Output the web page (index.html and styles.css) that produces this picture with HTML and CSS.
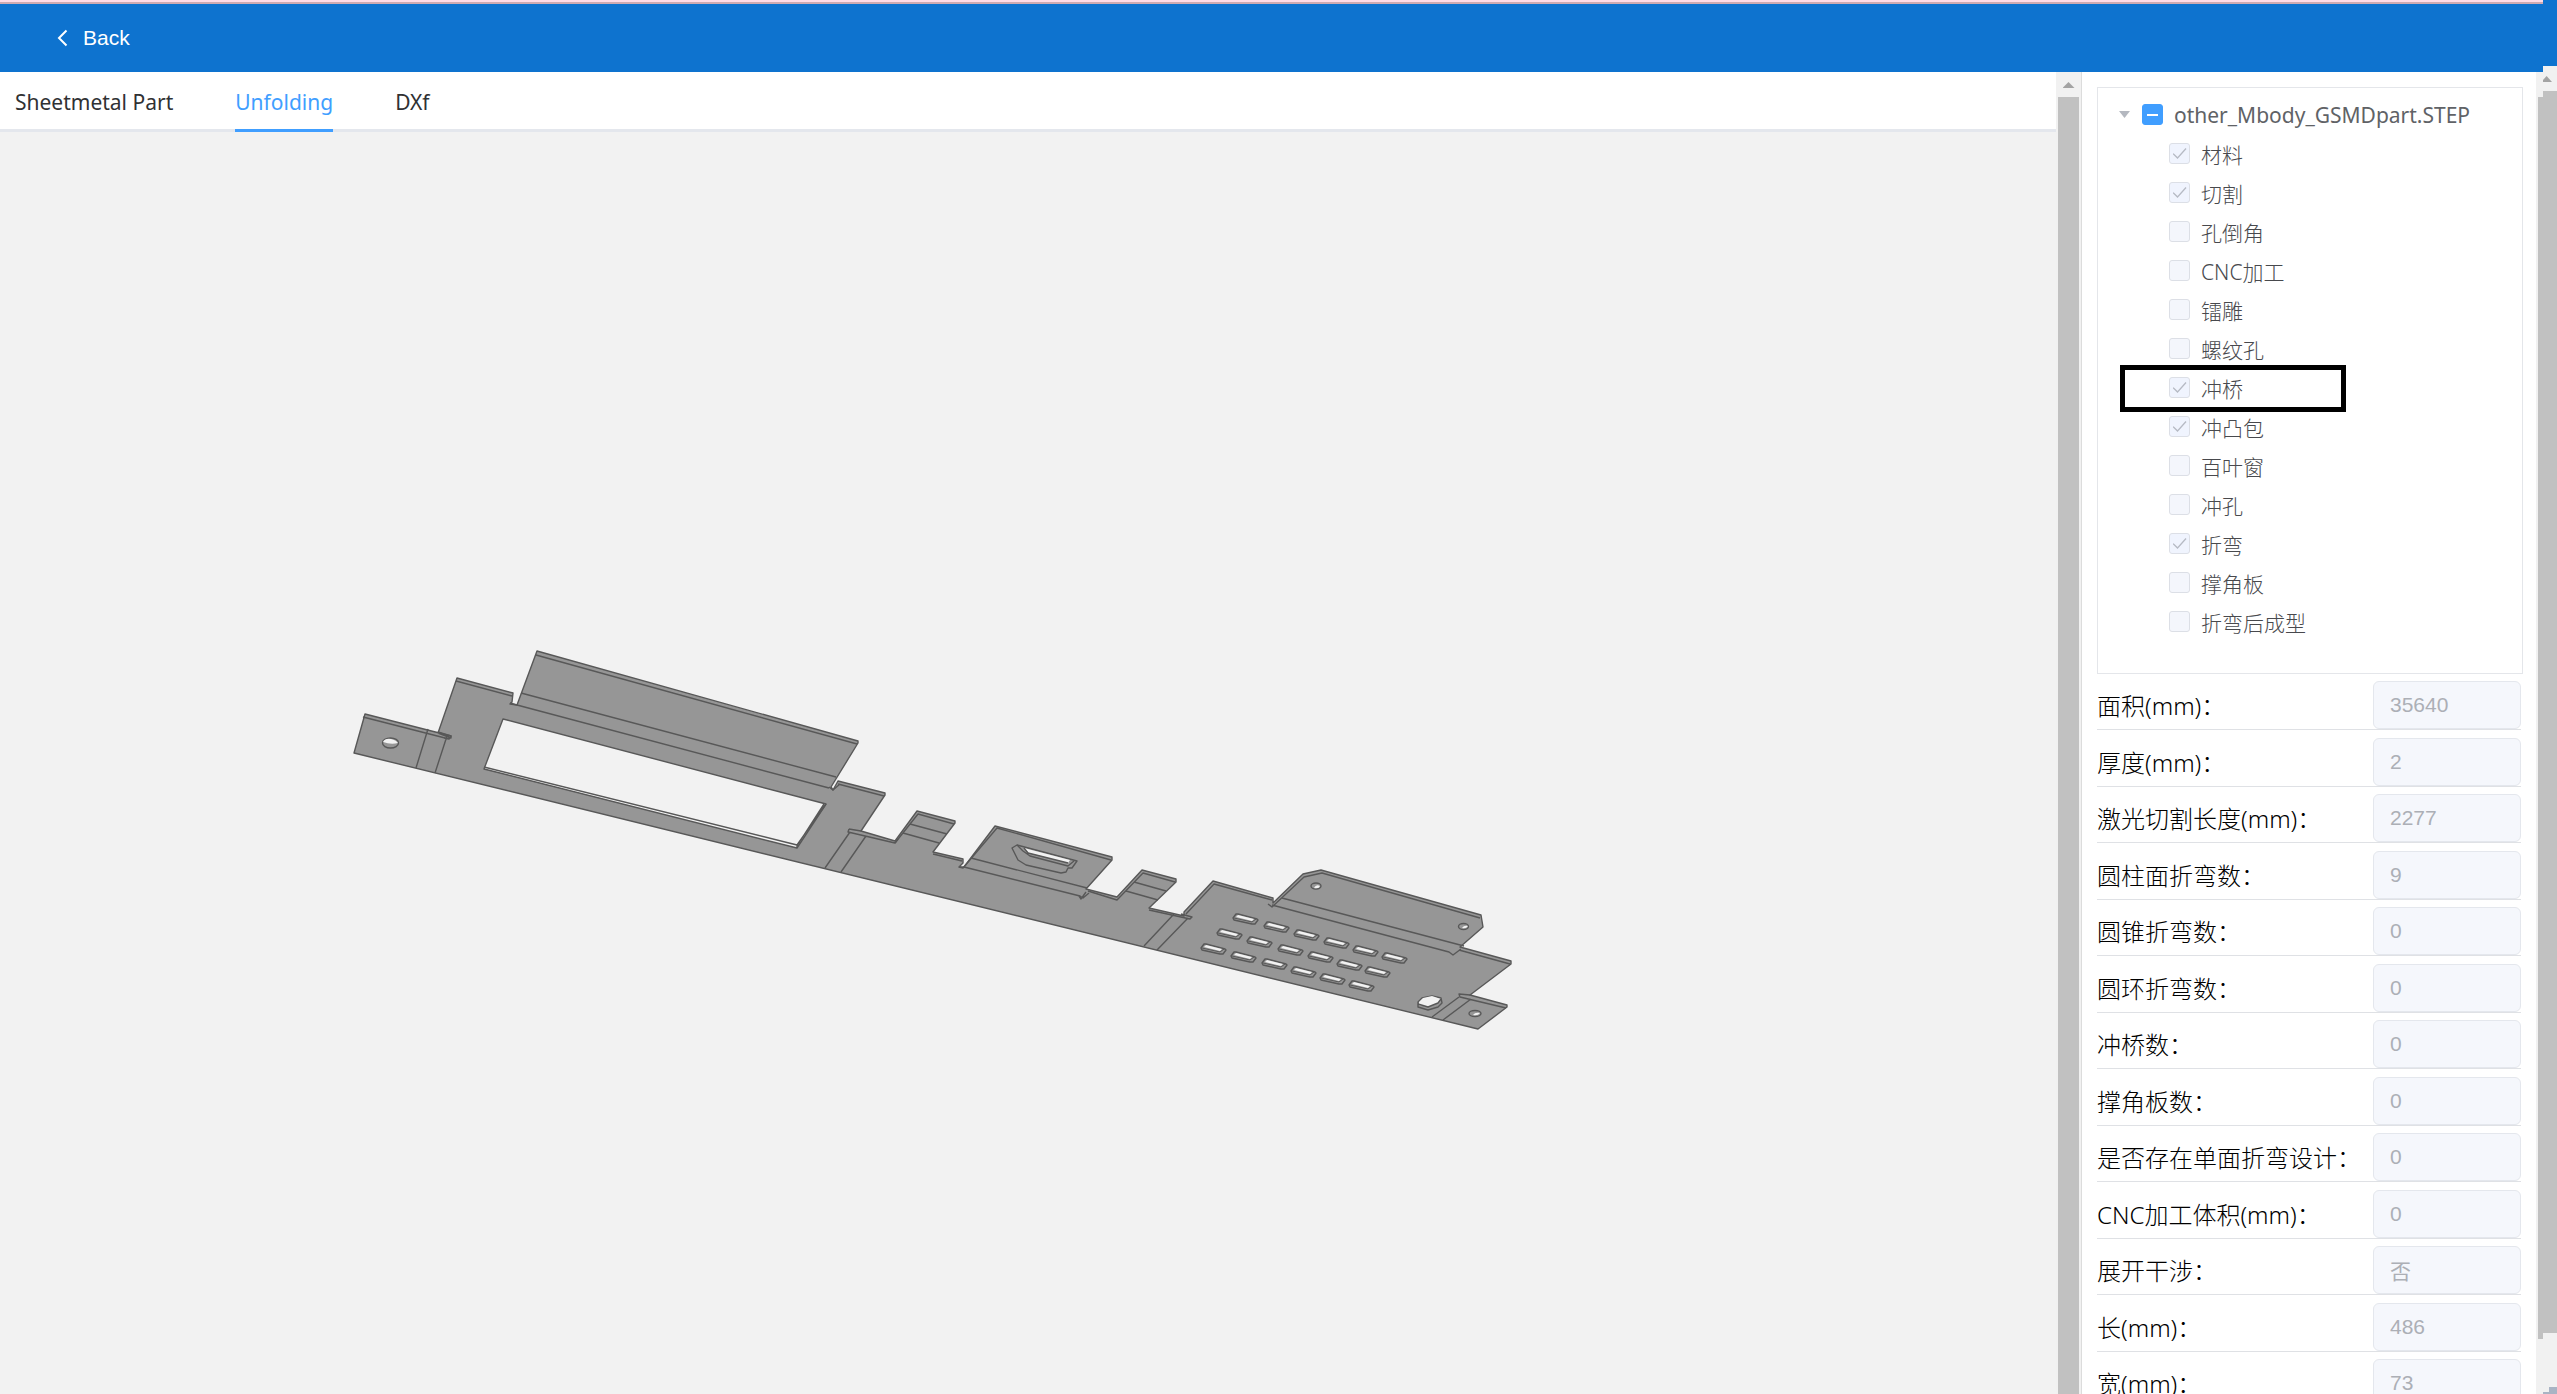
FILE: index.html
```
<!DOCTYPE html>
<html lang="zh-CN">
<head>
<meta charset="utf-8">
<title>Unfolding</title>
<link rel="stylesheet" href="styles.css">
</head>
<body>
<div class="app">
  <div class="main">
    <header class="topbar">
      <button class="back" type="button">
        <svg class="back-icon" viewBox="0 0 11 18" aria-hidden="true"><path d="M9.500 1.500 2 9l7.500 7.500"/></svg>
        Back
      </button>
    </header>
    <div class="body">
      <section class="viewer">
        <nav class="tabs">
          <a class="tab" href="#part">Sheetmetal Part</a>
          <a class="tab active" href="#unfolding">Unfolding</a>
          <a class="tab" href="#dxf">DXf</a>
        </nav>
        <div class="canvas">
          <svg class="model" viewBox="0 132 2056 1262" role="img" aria-label="Unfolded sheet metal part">
            <defs>
              <g id="slot">
                <path class="side" d="M3 0 22 5 23 6 20 10 17 10-1 6-2 4 1 0z"/>
                <path class="hole" d="M3 1 19 5 17 7 1 3z"/>
                <path class="edge slim" d="M-1 4 17 8 21 5"/>
              </g>
            </defs>
            <path class="plate" fill-rule="evenodd" d="M365 714 451 736 451 738 438 733 457 678 513 693 512 702 510 704 517 705 537 651 858 741 858 743 831 787 833 790 838 781 885 793 885 795 861 831 895 841 917 811 955 821 955 823 933 852 963 859 963 863 959 867 964 867 995 826 1112 857 1112 860 1086 889 1117 897 1142 870 1176 879 1176 882 1149 908 1184 916 1184 912 1213 881 1273 898 1273 903 1303 874 1321 870 1481 915 1483 927 1460 947 1511 961 1511 964 1470 995 1507 1005 1507 1007 1478 1029 354 753z
              M503 719 826 804 797 848 484 769z"/>
            <path class="edge" d="M363 717 449 739M456 681 512 696M536 655 857 744M438 732 451 736 449 739 444 738M428 729 416 768M447 736 435 773M521 693 836 777M510 703 517 705 829 788M829 787 833 790 840 784M838 784 884 796M484 767 797 845 797 848M826 804 797 845M824 804 797 846M849 829 848 832 895 843 898 839M849 829 861 831M850 832 825 868M866 836 841 872"/>
            <path class="edge" d="M895 843 918 814 954 824M910 824 947 834M903 833 939 843M933 854 962 861M959 867 963 868 997 828 1111 860M971 858 1087 888M964 867 1080 896 1083 898 1089 893M1079 896 1081 899 1086 892M1088 891 1117 900 1143 873 1175 882M1134 882 1166 891M1126 891 1158 900M1149 910 1190 919 1192 917 1181 914M1174 914 1144 946M1188 918 1157 950M1186 914 1214 884 1272 900M1268 904 1272 907 1304 877 1322 873 1480 918M1282 898 1464 946M1272 905 1449 952 1453 955 1461 949M1459 950 1510 964M1470 995 1459 994 1460 997 1506 1008M1459 997 1432 1017M1471 999 1443 1020"/>
            <path class="side" d="M1012 848 1017 845 1077 861 1072 868 1068 868 1066 872 1061 873 1026 865 1018 860z"/>
            <path class="hole" d="M1024 848 1070 860 1068 863 1029 853z"/>
            <path class="edge" d="M1017 845 1023 851 1030 856 1068 866 1074 861M1024 848 1028 853 1068 863"/>
            <use href="#slot" x="1235" y="914"/><use href="#slot" x="1266" y="922"/><use href="#slot" x="1296" y="930"/><use href="#slot" x="1326" y="938"/><use href="#slot" x="1355" y="946"/><use href="#slot" x="1384" y="953"/>
            <use href="#slot" x="1219" y="929"/><use href="#slot" x="1249" y="937"/><use href="#slot" x="1280" y="945"/><use href="#slot" x="1310" y="952"/><use href="#slot" x="1339" y="960"/><use href="#slot" x="1367" y="967"/>
            <use href="#slot" x="1203" y="944"/><use href="#slot" x="1233" y="952"/><use href="#slot" x="1264" y="959"/><use href="#slot" x="1293" y="967"/><use href="#slot" x="1322" y="974"/><use href="#slot" x="1351" y="981"/>
            <ellipse class="side" cx="390.500" cy="743" rx="8" ry="5"/><path class="hole" d="M383 742q2-4 8-3 5 1 7 4-7 2-15-1z"/>
            <ellipse class="side" cx="1316" cy="886" rx="5" ry="3"/><path class="hole" d="M1314 888q2-4 6-2-1 3-6 2z"/>
            <ellipse class="side" cx="1463.500" cy="926.500" rx="5" ry="3"/><path class="hole" d="M1462 928q2-3 6-2-2 3-6 2z"/>
            <ellipse class="side" cx="1475" cy="1013.500" rx="6" ry="3"/><path class="hole" d="M1473 1015q2-3 7-2-2 3-7 2z"/>
            <path class="side" d="M1418 1002 1422 998 1432 996 1441 998 1442 1003 1438 1007 1428 1010 1418 1007z"/>
            <path class="hole" d="M1419 1002 1423 998 1432 996 1441 999 1438 1003 1428 1007 1419 1005z"/>
            <path class="edge" d="M1418 1004 1428 1007 1438 1003 1441 999"/>
          </svg>
        </div>
      </section>
      <div class="scrollbar viewer-scroll" aria-hidden="true"><span class="arrow"></span><span class="thumb"></span></div>
      <aside class="panel">
        <ul class="tree">
          <li class="root"><span class="caret"></span><label><input class="box" type="checkbox">other_Mbody_GSMDpart.STEP</label></li>
          <li><label><input class="box" type="checkbox" checked disabled>材料</label></li>
          <li><label><input class="box" type="checkbox" checked disabled>切割</label></li>
          <li><label><input class="box" type="checkbox" disabled>孔倒角</label></li>
          <li><label><input class="box" type="checkbox" disabled>CNC加工</label></li>
          <li><label><input class="box" type="checkbox" disabled>镭雕</label></li>
          <li><label><input class="box" type="checkbox" disabled>螺纹孔</label></li>
          <li class="marked"><label><input class="box" type="checkbox" checked disabled>冲桥</label></li>
          <li><label><input class="box" type="checkbox" checked disabled>冲凸包</label></li>
          <li><label><input class="box" type="checkbox" disabled>百叶窗</label></li>
          <li><label><input class="box" type="checkbox" disabled>冲孔</label></li>
          <li><label><input class="box" type="checkbox" checked disabled>折弯</label></li>
          <li><label><input class="box" type="checkbox" disabled>撑角板</label></li>
          <li><label><input class="box" type="checkbox" disabled>折弯后成型</label></li>
        </ul>
        <form class="props">
          <label class="prop">面积(mm)：<input class="value" value="35640" disabled></label>
          <label class="prop">厚度(mm)：<input class="value" value="2" disabled></label>
          <label class="prop">激光切割长度(mm)：<input class="value" value="2277" disabled></label>
          <label class="prop">圆柱面折弯数：<input class="value" value="9" disabled></label>
          <label class="prop">圆锥折弯数：<input class="value" value="0" disabled></label>
          <label class="prop">圆环折弯数：<input class="value" value="0" disabled></label>
          <label class="prop">冲桥数：<input class="value" value="0" disabled></label>
          <label class="prop">撑角板数：<input class="value" value="0" disabled></label>
          <label class="prop">是否存在单面折弯设计：<input class="value" value="0" disabled></label>
          <label class="prop">CNC加工体积(mm)：<input class="value" value="0" disabled></label>
          <label class="prop">展开干涉：<input class="value" value="否" disabled></label>
          <label class="prop">长(mm)：<input class="value" value="486" disabled></label>
          <label class="prop">宽(mm)：<input class="value" value="73" disabled></label>
        </form>
      </aside>
      <div class="scrollbar panel-scroll" aria-hidden="true"><span class="thumb"></span></div>
    </div>
  </div>
  <div class="scrollbar page-scroll" aria-hidden="true"><span class="arrow"></span><span class="thumb"></span><span class="corner"></span></div>
</div>
</body>
</html>
```
FILE: styles.css
```
*, *::before, *::after { box-sizing: border-box; }

body {
  margin: 0;
  font-family: "Noto Sans", "Noto Sans CJK SC", sans-serif;
  font-size: 21px;
  color: #303133;
  background: #fff;
}

.app { display: flex; height: 100vh; overflow: hidden; }
.main { flex: 1; min-width: 0; display: flex; flex-direction: column; }

/* Top bar */
.topbar {
  flex: none;
  height: 72px;
  display: flex;
  align-items: center;
  padding: 4px 0 0 57px;
  background: linear-gradient(#ffdbe6 2px, #cfaab2 2px, #cfaab2 4px, #0e73cf 4px);
}
.back {
  display: flex;
  align-items: center;
  gap: 15px;
  padding: 0;
  border: 0;
  background: none;
  color: #fff;
  font: 21px/24px "Liberation Sans", sans-serif;
}
.back-icon {
  width: 11px;
  height: 18px;
  fill: none;
  stroke: #fff;
  stroke-width: 2;
}

.body { flex: 1; min-height: 0; display: flex; }

/* Viewer */
.viewer { flex: 1; min-width: 0; display: flex; flex-direction: column; }
.tabs {
  flex: none;
  height: 60px;
  display: flex;
  gap: 62px;
  padding-left: 15px;
  box-shadow: inset 0 -3px #e4e7ed;
}
.tab { line-height: 60px; color: #303133; text-decoration: none; }
.tab.active { color: #409eff; box-shadow: inset 0 -3px #409eff; }
.canvas { flex: 1; min-height: 0; background: #f2f2f2; }
.model { display: block; width: 100%; height: 100%; }
.plate, .side { fill: #969696; }
.edge { fill: none; }
.plate, .side, .edge { stroke: #585858; stroke-width: 1.4; stroke-linejoin: round; }
.slim { stroke-width: 1; }
.hole { fill: #f2f2f2; }

/* Scroll bars */
.scrollbar {
  flex: none;
  display: flex;
  flex-direction: column;
  align-items: center;
  background: #f1f1f1;
}
.arrow {
  flex: none;
  width: 12px;
  height: 6px;
  margin: 10px 0 9px;
  background: #a3a3a3;
  clip-path: polygon(50% 0, 100% 100%, 0 100%);
}
.thumb { flex: 1; width: 100%; background: #c1c1c1; }
.viewer-scroll { width: 25px; padding: 0 2px; }
.panel-scroll { width: 7px; padding: 25px 0 55px 2px; }
.page-scroll { width: 14px; border-top: 66px solid #0e73cf; }
.page-scroll .arrow { align-self: flex-start; width: 9px; clip-path: polygon(40% 0, 100% 100%, 0 100%, 0 67%); }
.corner {
  flex: none;
  width: 100%;
  height: 61px;
  background:
    linear-gradient(#a9b4c4, #a9b4c4) right bottom / 8px 7px no-repeat,
    linear-gradient(#a9b4c4, #a9b4c4) right bottom / 14px 2px no-repeat;
}

/* Side panel */
.panel {
  flex: none;
  width: 455px;
  overflow: hidden;
  padding: 15px 13px 0 15px;
  border-left: 1px solid #dcdcdc;
}
.tree {
  height: 587px;
  margin: 0 0 7px;
  padding: 7px 0 0;
  list-style: none;
  border: 1px solid #e4e6ea;
  color: #48494d;
  font-weight: 300;
}
.tree li { position: relative; height: 39px; padding-left: 71px; }
.tree .root {
  display: flex;
  align-items: center;
  gap: 12px;
  padding-left: 21px;
  color: #606266;
  font-weight: 400;
}
.tree label { display: flex; align-items: center; gap: 11px; height: 39px; }
.caret {
  width: 11px;
  height: 7px;
  background: #b4b8c0;
  clip-path: polygon(0 0, 100% 0, 50% 100%);
}
.box {
  appearance: none;
  flex: none;
  display: grid;
  place-items: center;
  width: 21px;
  height: 21px;
  margin: 0;
  border: 1px solid #dcdfe6;
  border-radius: 3px;
  background: #f4f6fc;
}
.box:checked { background: #f0f4fe; }
.box:checked::after {
  content: "";
  width: 14px;
  height: 11px;
  background: #b6bac4;
  clip-path: polygon(0 55%, 8% 47%, 36% 82%, 93% 0, 100% 8%, 36% 100%);
}
.root .box { background: #409eff; border-color: #409eff; }
.root .box::after { content: ""; width: 11px; height: 2px; background: #fff; }
.marked::before {
  content: "";
  position: absolute;
  left: 22px;
  top: -3px;
  width: 226px;
  height: 47px;
  border: 5px solid #000;
}

/* Properties */
.props { margin-right: 2px; color: #000; font-size: 24px; font-weight: 300; }
.prop {
  display: flex;
  align-items: flex-end;
  justify-content: space-between;
  height: 57px;
  line-height: 46px;
  border-bottom: 1px solid #dfe1e5;
}
.prop:nth-child(odd) { height: 56px; }
.prop:first-child { height: 49px; }
.value {
  width: 148px;
  height: 48px;
  padding: 0 16px;
  border: 1px solid #e4e7ed;
  border-radius: 6px;
  background: #f5f7fc;
  color: #acafb6;
  font: 21px "Liberation Sans", "Noto Sans CJK SC", sans-serif;
}
```
